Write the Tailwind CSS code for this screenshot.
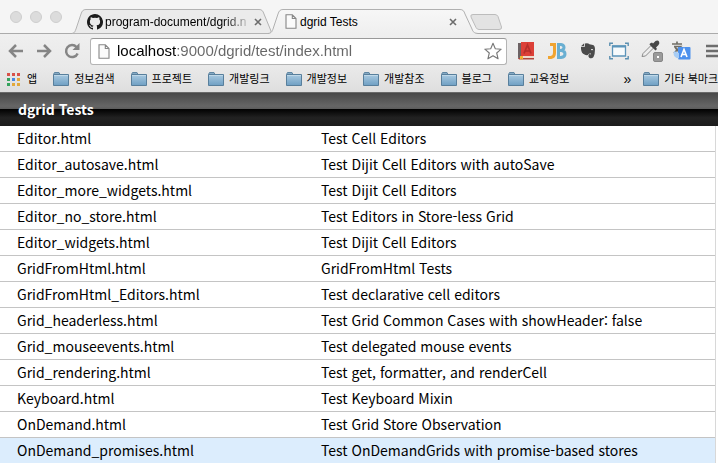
<!DOCTYPE html>
<html lang="ko">
<head>
<meta charset="utf-8">
<title>dgrid Tests</title>
<script src="https://cdn.jsdelivr.net/npm/@tailwindcss/browser@4"></script>
</head>
<body class="h-screen overflow-hidden bg-white font-['Liberation_Sans','Noto_Sans_CJK_KR',sans-serif] text-black">
<svg class="absolute size-0" aria-hidden="true">
  <defs>
    <linearGradient id="folderFill" x1="0" y1="0" x2="0" y2="1"><stop offset="0" stop-color="#a9cae1"/><stop offset="1" stop-color="#6f9fc3"/></linearGradient>
    <linearGradient id="tabFill" x1="0" y1="0" x2="0" y2="1"><stop offset="0" stop-color="#f7f7f7"/><stop offset="1" stop-color="#efefef"/></linearGradient>
  </defs>
  <symbol id="folder" viewBox="0 0 16 14">
    <path d="M.5 2.5 1.5 .5H6L7 2.5" fill="#86aac4" stroke="#5f86a3"/>
    <path d="M.5 2.5H15.5V13.5H.5Z" fill="url(#folderFill)" stroke="#587f9c"/>
    <path d="M1 3.5H15" stroke="#bfd8e8"/>
  </symbol>
  <symbol id="page" viewBox="0 0 12 15">
    <path d="M1 .8H7.3L11 4.5V14.2H1ZM7.3 .8V4.5H11" fill="#fbfbfb" stroke="#868686" stroke-width="1.1"/>
  </symbol>
  <symbol id="close" viewBox="0 0 8 8">
    <path d="M1 1 7 7M7 1 1 7" stroke="#6c6c6c" stroke-width="1.6"/>
  </symbol>
</svg>
<div class="flex h-full flex-col">
  <header class="shrink-0 border-b border-[#6a6a6a] bg-[#e6e6e6]">
    <div class="relative flex h-[34px] bg-[#f5f5f5] pt-[9px]">
      <div class="absolute inset-x-0 bottom-0 h-px bg-[#ababab]"></div>
      <div class="flex w-[72px] shrink-0 gap-2 pt-[2px] pl-[10px]">
        <span class="size-3 rounded-full border border-[#cecece] bg-[#dcdcdc]"></span>
        <span class="size-3 rounded-full border border-[#cecece] bg-[#dcdcdc]"></span>
        <span class="size-3 rounded-full border border-[#cecece] bg-[#dcdcdc]"></span>
      </div>
      <div class="relative flex w-[200px] shrink-0 items-center pr-[10px] pl-[15px]">
        <svg class="absolute inset-0 h-full w-full" viewBox="0 0 200 25" preserveAspectRatio="none"><path d="M0 24.5C3 24 3 22 4 20L9 5C10 2 11 .5 14 .5H187C190 .5 191 2 192 5L199 22V24.5Z" fill="#ebebeb" stroke="#b3b3b3"/></svg>
        <svg class="relative mr-[2px] size-4 shrink-0" viewBox="0 0 16 16"><path fill="#1c1c1c" fill-rule="evenodd" d="M8 0C3.6 0 0 3.6 0 8c0 3.5 2.3 6.5 5.5 7.6.4.1.5-.2.5-.4v-1.5c-2 .4-2.600-.5-2.700-.9-.1-.3-.5-1-.8-1.200-.3-.2-.7-.5 0-.5.6 0 1.100.6 1.200.8.7 1.200 1.900.9 2.300.7.1-.5.3-.9.500-1.100-1.800-.2-3.600-.9-3.600-4 0-.9.3-1.600.8-2.200-.1-.2-.4-1 .1-2.100 0 0 .7-.2 2.200.8a7.400 7.400 0 0 1 4 0c1.500-1 2.200-.8 2.200-.8.4 1.100.2 1.900.1 2.100.5.6.8 1.300.8 2.200 0 3.100-1.900 3.700-3.600 3.900.3.3.5.7.5 1.500v2.300c0 .2.1.5.5.4A8 8 0 0 0 8 0Z"/></svg>
        <span class="relative min-w-0 flex-1 bg-linear-to-r from-black from-80% to-[#ccc] bg-clip-text text-[12px] leading-4 whitespace-nowrap text-transparent">program-document/dgrid.n</span>
        <button type="button" aria-label="Close program-document tab" class="relative ml-[6px] shrink-0"><svg class="size-2"><use href="#close"/></svg></button>
      </div>
      <div class="relative -ml-1 flex w-[210px] shrink-0 items-center pr-[15px] pl-[17px]">
        <svg class="absolute inset-0 h-full w-full" viewBox="0 0 210 25" preserveAspectRatio="none"><path d="M0 25C4 24 4 22 5 20L10 5C11 2 12 .5 15 .5H192C195 .5 196 2 197 5L204 20C205 23 206 24 210 25Z" fill="url(#tabFill)"/><path d="M0 24.500C4 24 4 22 5 20L10 5C11 2 12 .5 15 .5H192C195 .5 196 2 197 5L204 20C205 23 206 24 210 24.500" fill="none" stroke="#b0b0b0"/></svg>
        <svg class="relative mr-[3px] h-[15px] w-3 shrink-0"><use href="#page"/></svg>
        <span class="relative flex-1 text-[12px] leading-4">dgrid Tests</span>
        <button type="button" aria-label="Close dgrid Tests tab" class="relative mr-[6px] shrink-0"><svg class="size-2"><use href="#close"/></svg></button>
      </div>
      <button type="button" aria-label="New tab" class="relative -ml-2 h-[22px] w-8 shrink-0"><svg class="h-full w-full" viewBox="0 0 32 22"><path d="M3 5.500H25Q27 5.500 28 7.500L31.500 18Q32 20.500 29 20.500H9Q7 20.500 6 18.500L1 8Q0 5.500 3 5.500Z" fill="#e3e3e3" stroke="#bcbcbc"/></svg></button>
    </div>
    <div class="flex h-[34px] items-center bg-linear-to-b from-[#efefef] to-[#e9e9e9] pl-2">
      <nav class="flex shrink-0 gap-3">
        <button type="button" aria-label="Back"><svg class="size-4" viewBox="0 0 16 16" fill="none" stroke="#858585" stroke-width="2.500"><path d="M1.500 8H15M8 2 2 8 8 14"/></svg></button>
        <button type="button" aria-label="Forward"><svg class="size-4" viewBox="0 0 16 16" fill="none" stroke="#858585" stroke-width="2.500"><path d="M1 8H14.500M8 2 14 8 8 14"/></svg></button>
        <button type="button" aria-label="Reload"><svg class="size-4" viewBox="0 0 16 16"><path d="M13.600 10.500A6 6 0 1 1 12.500 4" fill="none" stroke="#858585" stroke-width="2.500"/><path d="M15.500 0V7H8.500Z" fill="#858585"/></svg></button>
      </nav>
      <div class="ml-[10px] flex h-[27px] min-w-0 flex-1 items-center rounded-[3px] border border-[#b4b4b4] border-t-[#999] bg-white pr-1 pl-[7px]">
        <svg class="mr-[7px] h-[15px] w-3 shrink-0"><use href="#page"/></svg>
        <div class="min-w-0 flex-1">
          <input aria-label="Address" type="text" value="localhost:9000/dgrid/test/index.html" class="block w-full bg-transparent bg-linear-to-r from-black from-[59px] to-[#666] to-[59px] bg-clip-text text-[15px] leading-5 text-transparent outline-none">
        </div>
        <button type="button" aria-label="Bookmark this page" class="shrink-0"><svg class="size-[18px]" viewBox="0 0 18 18"><path d="M9 1.200 11.300 6.700 17.200 7.200 12.700 11 14.100 16.800 9 13.700 3.900 16.800 5.300 11 .8 7.200 6.700 6.700Z" fill="#fff" stroke="#777" stroke-width="1.100" stroke-linejoin="round"/></svg></button>
      </div>
      <div class="ml-[10px] flex shrink-0 items-center gap-3">
        <button type="button" aria-label="Dictionary"><svg class="h-[18px] w-[18px]" viewBox="0 0 18 18"><path d="M1 1H5V17H2Q1 17 1 15Z" fill="#6c6264"/><path d="M4 0H17V14H4Z" fill="#dc4038"/><path d="M3 14H17V17H3Z" fill="#eed9cb"/><path d="M1 16H17V17.500H2Z" fill="#b0453c"/><path d="M3 14H6V18L4.500 16.500 3 18Z" fill="#f2b632"/><path d="M7 11.500 10.500 3 14 11.500M8.300 9H12.700" fill="none" stroke="#b52f2b" stroke-width="1.700"/></svg></button>
        <button type="button" aria-label="JetBrains support"><svg class="h-[18px] w-5" viewBox="0 0 20 18" fill="none" stroke-width="3"><path d="M3 2.500H7.500V11Q7.500 15 4 15.500H1" stroke="#f0a431"/><path d="M11.500 2V15.500M10 2.500H14Q17 3 17 5.500T13.500 8.500H12H14.500Q18 9 18 12T14 15.500H10" stroke="#69afd2"/></svg></button>
        <button type="button" aria-label="Web clipper"><svg class="h-[18px] w-[18px]" viewBox="0 0 18 18"><path d="M6 1.500Q9 .8 10.500 2.200L14 3Q16 3.500 16 7.500Q16 12 14.500 15Q13 17 10.500 16Q9 15 9.500 13Q10.500 11.500 12 12.500V11.500Q9 11 9 13Q7 13.500 5.500 12.500Q2.500 11.500 2 7V5H5Q6 5 6 4Z" fill="#4b4b4b"/><path d="M2 4.300 5.200 1.200V4.300Z" fill="#4b4b4b"/><path d="M12 7.300Q14 6.500 14.300 8.300Q13 7.800 12 8.200Z" fill="#ededed"/></svg></button>
        <button type="button" aria-label="Window resizer"><svg class="h-[18px] w-5" viewBox="0 0 20 18"><path d="M3.500 4H16.500V14H3.500Z" fill="#f6fafc" stroke="#5b94b9" stroke-width="1.300"/><path d="M3 4.500H17" stroke="#5b94b9" stroke-width="2"/><path d="M.8 4V1.300H4M16 1.300H19.200V4M19.200 14V16.700H16M4 16.700H.8V14" fill="none" stroke="#5b8fb0" stroke-width="1.400"/></svg></button>
        <button type="button" aria-label="Color picker"><svg class="h-[22px] w-[22px]" viewBox="0 0 22 22"><path d="M1 16.500 2 13.500 10 5.500 12.500 8 4.500 16Z" fill="#eee" stroke="#8a8a8a"/><path d="M9 3.500 11 2.500 12 3.500 14.500 1Q17 0 18 1.500T17.500 5L15 7.500 16 9 14.500 10.500 8.500 4.500Z" fill="#484848"/><rect x="12.500" y="12.500" width="9" height="9" rx="1.500" fill="#9b9b9b" stroke="#868686"/><path d="M16 16H18V18H16Z" fill="#fff"/></svg></button>
        <button type="button" aria-label="Translate" class="mr-[3px] -ml-1"><svg class="h-5 w-5" viewBox="0 0 20 20"><path d="M1 3H11M6 .5V3M3 5.500H9.500L3 12M4 6Q6 10 10 12" fill="none" stroke="#706e66" stroke-width="1.700"/><rect x="7" y="6" width="12.500" height="12.500" rx="1" fill="#4d91ed"/><path d="M3 10Q1 17 8 17.500V12Z" fill="#a8cdf5"/><path d="M10 16 13 8.500 16 16M11 13.500H15" fill="none" stroke="#fff" stroke-width="1.600"/></svg></button>
        <button type="button" aria-label="Menu" class="w-3 overflow-hidden"><svg class="h-[14px] w-4" viewBox="0 0 16 14"><path d="M0 2H16M0 7H16M0 12H16" stroke="#6d6d6d" stroke-width="2.400"/></svg></button>
      </div>
    </div>
    <nav class="flex h-6 items-center overflow-hidden bg-linear-to-b from-[#e9e9e9] to-[#dedede] pb-[2px] pl-[7px] text-[11px] leading-4 whitespace-nowrap">
      <a href="#" class="mr-4 flex shrink-0 items-center gap-[7px]"><svg class="size-[13px]" viewBox="0 0 13 13"><path d="M0 0H3V3H0ZM5 0H8V3H5ZM10 0H13V3H10Z" fill="#d85148"/><path d="M0 5H3V8H0Z" fill="#35a35d"/><path d="M5 5H8V8H5Z" fill="#4787e2"/><path d="M10 5H13V8H10ZM5 10H8V13H5ZM10 10H13V13H10Z" fill="#e2a83b"/><path d="M0 10H3V13H0Z" fill="#35a35d"/></svg>앱</a>
      <div class="flex min-w-0 flex-1 gap-4 overflow-hidden">
        <a href="#" class="flex shrink-0 items-center gap-[5px]"><svg class="h-[14px] w-4"><use href="#folder"/></svg>정보검색</a>
        <a href="#" class="flex shrink-0 items-center gap-[5px]"><svg class="h-[14px] w-4"><use href="#folder"/></svg>프로젝트</a>
        <a href="#" class="flex shrink-0 items-center gap-[5px]"><svg class="h-[14px] w-4"><use href="#folder"/></svg>개발링크</a>
        <a href="#" class="flex shrink-0 items-center gap-[5px]"><svg class="h-[14px] w-4"><use href="#folder"/></svg>개발정보</a>
        <a href="#" class="flex shrink-0 items-center gap-[5px]"><svg class="h-[14px] w-4"><use href="#folder"/></svg>개발참조</a>
        <a href="#" class="flex shrink-0 items-center gap-[5px]"><svg class="h-[14px] w-4"><use href="#folder"/></svg>블로그</a>
        <a href="#" class="flex shrink-0 items-center gap-[5px]"><svg class="h-[14px] w-4"><use href="#folder"/></svg>교육정보</a>
      </div>
      <button type="button" aria-label="More bookmarks" class="mr-3 shrink-0 text-[14px] leading-4">»</button>
      <a href="#" class="flex shrink-0 items-center gap-[5px]"><svg class="h-[14px] w-4"><use href="#folder"/></svg>기타 북마크</a>
    </nav>
  </header>
  <main class="min-h-0 flex-1 overflow-hidden font-['Noto_Sans_CJK_KR',sans-serif] text-[14px] leading-[25px]">
    <h1 class="h-[33px] bg-[linear-gradient(to_bottom,#484848_0,#666_40%,#5c5c5c_48%,#000_48%,#222_75%,#1c1c1c_100%)] pl-[18px] leading-[33px] font-bold text-white">dgrid Tests</h1>
    <div class="mr-[2px] border-r border-[#d8d8d8]">
      <table class="w-full table-fixed border-separate border-spacing-0 text-left">
        <colgroup><col class="w-[304px]"><col></colgroup>
        <tbody class="[&_td]:h-[26px] [&_td]:border-b [&_td]:border-[#c4c4c4] [&_td]:p-0 [&_td]:pl-[17px] [&_td]:whitespace-nowrap">
          <tr><td>Editor.html</td><td>Test Cell Editors</td></tr>
          <tr><td>Editor_autosave.html</td><td>Test Dijit Cell Editors with autoSave</td></tr>
          <tr><td>Editor_more_widgets.html</td><td>Test Dijit Cell Editors</td></tr>
          <tr><td>Editor_no_store.html</td><td>Test Editors in Store-less Grid</td></tr>
          <tr><td>Editor_widgets.html</td><td>Test Dijit Cell Editors</td></tr>
          <tr><td>GridFromHtml.html</td><td>GridFromHtml Tests</td></tr>
          <tr><td>GridFromHtml_Editors.html</td><td>Test declarative cell editors</td></tr>
          <tr><td>Grid_headerless.html</td><td>Test Grid Common Cases with showHeader: false</td></tr>
          <tr><td>Grid_mouseevents.html</td><td>Test delegated mouse events</td></tr>
          <tr><td>Grid_rendering.html</td><td>Test get, formatter, and renderCell</td></tr>
          <tr><td>Keyboard.html</td><td>Test Keyboard Mixin</td></tr>
          <tr><td>OnDemand.html</td><td>Test Grid Store Observation</td></tr>
          <tr class="bg-[#dcedfd]"><td>OnDemand_promises.html</td><td>Test OnDemandGrids with promise-based stores</td></tr>
        </tbody>
      </table>
    </div>
  </main>
</div>
</body>
</html>
